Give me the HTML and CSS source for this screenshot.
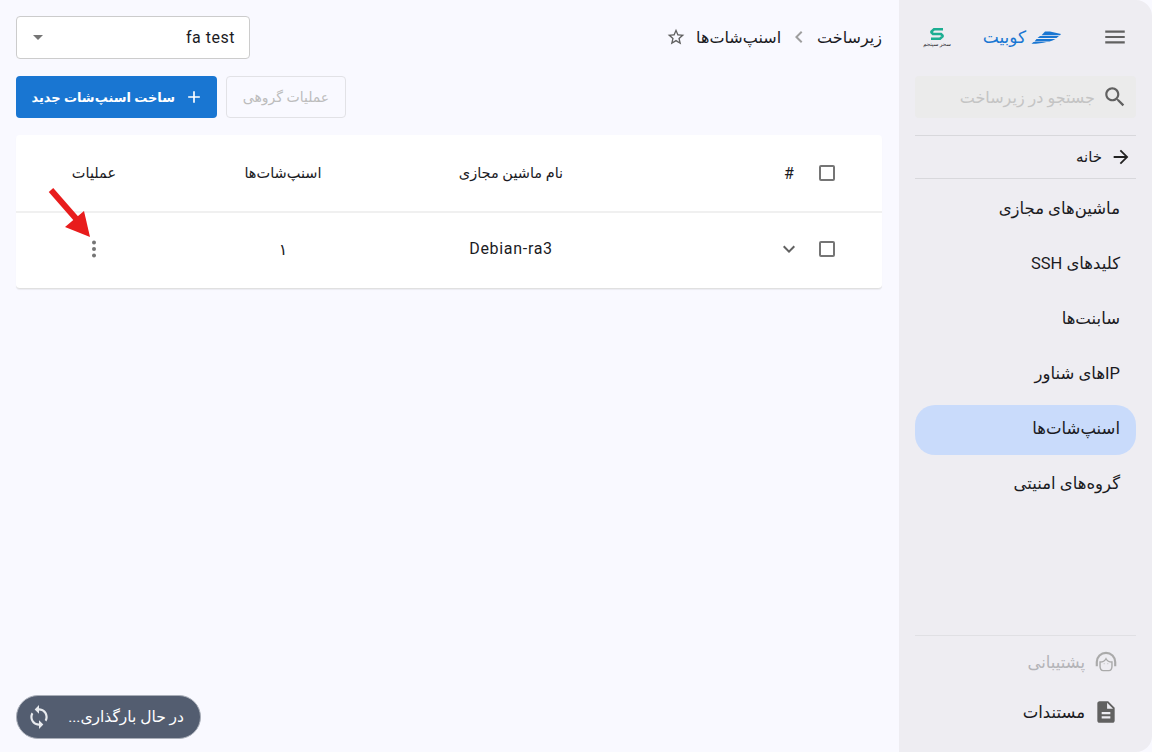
FILE: index.html
```html
<!DOCTYPE html>
<html lang="fa" dir="rtl">
<head>
    <meta charset="UTF-8">
    <title>اسنپ‌شات‌ها</title>
    <link rel="stylesheet" href="styles.css">
</head>
<body>
    <aside class="sidebar">
        <div class="side-top">
            <svg class="menu-icon" width="26" height="26" viewBox="0 0 24 24"><path d="M3 18h18v-2H3zm0-5h18v-2H3zm0-7v2h18V6z"/></svg>
            <div class="brand">
                <svg width="31" height="13" viewBox="0 0 31 13" fill="#1976d2"><path d="M14 0.5h5l11 2.5-1 1.2H10.500z"/><path d="M9 5h19l-2.500 2H6.500z"/><path d="M5.500 8h19c-2 1.200-4 2-6 2.400H3.500z"/><path d="M2.500 11h13c-4 1.200-9 1.700-15 1.800z"/></svg>
                <span>کوبیت</span>
            </div>
            <div class="partner">
                <svg width="16" height="14" viewBox="0 0 16 14" fill="none" stroke="#1cae92" stroke-width="2.600"><path d="M14 2.300H5L2.500 4.500v1L4 7h8l1.500 1.500v1L11 11.700H2"/></svg>
                <span>سحر سپنجم</span>
            </div>
        </div>
        <div class="search">
            <svg width="26" height="26" viewBox="0 0 24 24" fill="#616161"><path d="M15.5 14h-.79l-.28-.27C15.41 12.59 16 11.11 16 9.5 16 5.91 13.09 3 9.5 3S3 5.91 3 9.5 5.91 16 9.5 16c1.61 0 3.09-.59 4.23-1.57l.27.28v.79l5 4.99L20.49 19zm-6 0C7.01 14 5 11.99 5 9.5S7.01 5 9.5 5 14 7.01 14 9.5 11.99 14 9.5 14z"/></svg>
            <span>جستجو در زیرساخت</span>
        </div>
        <div class="home-link">
            <svg width="22" height="22" viewBox="0 0 24 24" fill="#222"><path d="M12 4l-1.41 1.41L16.17 11H4v2h12.17l-5.58 5.59L12 20l8-8z"/></svg>
            <span>خانه</span>
        </div>
        <nav class="nav">
            <a class="nav-item">ماشین‌های مجازی</a>
            <a class="nav-item">کلیدهای SSH</a>
            <a class="nav-item">سابنت‌ها</a>
            <a class="nav-item">IPهای شناور</a>
            <a class="nav-item active">اسنپ‌شات‌ها</a>
            <a class="nav-item">گروه‌های امنیتی</a>
        </nav>
        <div class="side-bottom">
            <div class="bottom-item muted">
                <svg width="26" height="26" viewBox="0 0 24 24" fill="none" stroke="#aaa" stroke-width="2"><path d="M3.500 16v-4a8.500 8.500 0 0 1 17 0v4"/><path d="M6.500 12c3 0 4.500-1 5.500-3 1 2 2.500 3 5.500 3v4c0 2-1 4-3 4h-5c-2 0-3-2-3-4z" stroke-width="1.300"/><path d="M10 13.500h.5M13.500 13.500h.5" stroke-width="1.300"/></svg>
                <span>پشتیبانی</span>
            </div>
            <div class="bottom-item">
                <svg width="26" height="26" viewBox="0 0 24 24" fill="#616161"><path d="M14 2H6c-1.100 0-2 .9-2 2v16c0 1.100.9 2 2 2h12c1.100 0 2-.9 2-2V8zm2 16H8v-2h8zm0-4H8v-2h8zm-3-5V3.500L18.500 9z"/></svg>
                <span>مستندات</span>
            </div>
        </div>
    </aside>

    <main class="main">
        <header class="top-row">
            <div class="crumbs">
                <span>زیرساخت</span>
                <svg width="24" height="24" viewBox="0 0 24 24" fill="#9e9e9e"><path d="M15.410 7.410 14 6l-6 6 6 6 1.410-1.410L10.830 12z"/></svg>
                <span>اسنپ‌شات‌ها</span>
                <svg class="star" width="20" height="20" viewBox="0 0 24 24" fill="#616161"><path d="M22 9.240l-7.190-.62L12 2 9.190 8.630 2 9.240l5.460 4.730L5.820 21 12 17.270 18.180 21l-1.630-7.030L22 9.240zM12 15.400l-3.760 2.270 1-4.280-3.320-2.880 4.380-.38L12 6.100l1.710 4.040 4.380.38-3.320 2.880 1 4.280L12 15.400z"/></svg>
            </div>
            <div class="select">
                <span>fa test</span>
                <i class="caret"></i>
            </div>
        </header>

        <div class="toolbar">
            <button class="btn btn-primary">
                <svg width="20" height="20" viewBox="0 0 24 24" fill="#fff"><path d="M19 13h-6v6h-2v-6H5v-2h6V5h2v6h6z"/></svg>
                <span>ساخت اسنپ‌شات جدید</span>
            </button>
            <button class="btn btn-disabled">عملیات گروهی</button>
        </div>

        <section class="table">
            <div class="row row-head">
                <span class="check"></span>
                <span class="cell cell-hash">#</span>
                <span></span>
                <span class="cell">نام ماشین مجازی</span>
                <span class="cell">اسنپ‌شات‌ها</span>
                <span class="cell cell-ops">عملیات</span>
            </div>
            <div class="row row-body">
                <span class="check"></span>
                <svg class="cell-icon" width="24" height="24" viewBox="0 0 24 24" fill="#616161"><path d="M7.410 8.590 12 13.170l4.590-4.580L18 10l-6 6-6-6z"/></svg>
                <span></span>
                <span class="cell cell-name">Debian-ra3</span>
                <span class="cell">۱</span>
                <span class="cell cell-ops">
                    <svg class="dots" width="24" height="24" viewBox="0 0 24 24" fill="#757575"><circle cx="12" cy="5.500" r="2"/><circle cx="12" cy="12" r="2"/><circle cx="12" cy="18.500" r="2"/></svg>
                </span>
            </div>
        </section>

        <svg class="red-arrow" width="50" height="56" viewBox="0 0 50 56"><path d="M3 2 L31 34" stroke="#e81c1c" stroke-width="6" fill="none"/><path d="M42 49 L17 39 L36 23z" fill="#e81c1c"/></svg>

        <div class="loading">
            <span>در حال بارگذاری...</span>
            <svg width="26" height="26" viewBox="0 0 24 24" fill="#e8eaee"><path d="M12 4V1L8 5l4 4V6c3.310 0 6 2.690 6 6 0 1.010-.25 1.970-.7 2.800l1.460 1.460C19.540 15.030 20 13.570 20 12c0-4.420-3.580-8-8-8zm0 14c-3.310 0-6-2.690-6-6 0-1.010.25-1.970.7-2.800L5.240 7.740C4.460 8.970 4 10.430 4 12c0 4.420 3.580 8 8 8v3l4-4-4-4z"/></svg>
        </div>
    </main>
</body>
</html>
```

FILE: styles.css
```css
* {
    box-sizing: border-box;
}

html, body {
    height: 100%;
}

body {
    margin: 0;
    display: flex;
    height: 752px;
    overflow: hidden;
    background-color: #f9f9ff;
    color: #1b1b1f;
    font-family: Roboto, "Noto Sans", "DejaVu Sans", sans-serif;
    font-size: 16px;
}

/* sidebar */
.sidebar {
    width: 253px;
    flex-shrink: 0;
    display: flex;
    flex-direction: column;
    padding: 0 16px 15px;
    background-color: #eeedf2;
    border-radius: 0 16px 16px 0;
}

.side-top {
    display: flex;
    align-items: center;
    justify-content: space-between;
    height: 76px;
    padding: 0 8px 2px 0;
}

.menu-icon {
    fill: #616161;
}

.brand {
    display: flex;
    align-items: center;
    gap: 5px;
    margin-right: 5px;
    color: #1976d2;
    font-size: 17px;
    font-weight: 500;
}

.partner {
    display: flex;
    flex-direction: column;
    align-items: center;
    width: 22px;
    margin-left: 11px;
    font-size: 5.500px;
    line-height: 7px;
    white-space: nowrap;
}

.search {
    display: flex;
    align-items: center;
    gap: 7px;
    height: 42px;
    padding: 0 8px;
    margin-bottom: 17px;
    background-color: #ebebeb;
    border-radius: 4px;
    color: #c4c4c4;
    font-size: 16px;
}

.home-link {
    display: flex;
    align-items: center;
    gap: 8px;
    height: 44px;
    padding: 0 4px;
    border-top: 1px solid #d8d8dc;
    border-bottom: 1px solid #d8d8dc;
    font-size: 15px;
}

.nav {
    display: flex;
    flex-direction: column;
    margin-top: 3px;
}

.nav-item {
    display: flex;
    align-items: center;
    height: 50px;
    margin: 2.500px 0;
    padding: 0 16px 2px;
    border-radius: 20px;
    font-size: 16.500px;
}

.nav-item.active {
    background-color: #c9dbfb;
}

.side-bottom {
    margin-top: auto;
    padding-top: 1px;
    border-top: 1px solid #e0e0e4;
}

.bottom-item {
    display: flex;
    align-items: center;
    gap: 8px;
    height: 50px;
    padding: 0 17px 0 0;
    font-size: 16.500px;
}

.muted {
    color: #b4b4b8;
}

/* main */
.main {
    position: relative;
    flex: 1;
    padding: 16px 17px 16px 16px;
}

.top-row {
    display: flex;
    align-items: center;
    justify-content: space-between;
    height: 42px;
    margin-bottom: 18px;
}

.crumbs {
    display: flex;
    align-items: center;
    gap: 6px;
    font-size: 16px;
}

.star {
    margin-right: 4px;
}

.select {
    display: flex;
    align-items: center;
    justify-content: space-between;
    width: 234px;
    height: 43px;
    padding: 0 14px;
    background-color: #fff;
    border: 1px solid #ccc;
    border-radius: 4px;
    font-size: 16px;
    letter-spacing: 0.500px;
}

.caret {
    width: 0;
    height: 0;
    margin-left: 2px;
    border-left: 5px solid transparent;
    border-right: 5px solid transparent;
    border-top: 5px solid #757575;
}

.toolbar {
    display: flex;
    flex-direction: row-reverse;
    justify-content: flex-start;
    gap: 9px;
    margin-bottom: 17px;
}

.btn {
    display: flex;
    align-items: center;
    gap: 9px;
    height: 42px;
    padding: 0 13px;
    border-radius: 4px;
    font-family: inherit;
    font-size: 14px;
    white-space: nowrap;
}

.btn svg {
    flex-shrink: 0;
}

.btn-primary {
    width: 201px;
    background-color: #1976d2;
    border: none;
    color: #fff;
    font-size: 13px;
    font-weight: 700;
}

.btn-disabled {
    width: 120px;
    justify-content: center;
    background: none;
    border: 1px solid #e2e2e6;
    color: #bdbdbd;
}

.table {
    background-color: #fff;
    border-bottom: 1px solid #e0e0e0;
    border-radius: 4px;
    box-shadow: 0 1px 1px rgba(0, 0, 0, 0.06);
}

.row {
    display: grid;
    grid-template-columns: 44px 32px 148px 228px 228px 1fr;
    align-items: center;
    padding-right: 33px;
}

.row-head {
    height: 78px;
    border-bottom: 2px solid #f0f0f0;
    font-size: 14.500px;
    font-weight: 500;
}

.row-body {
    height: 75px;
    padding-bottom: 3px;
    font-size: 16px;
}

.cell {
    text-align: center;
}

.cell-hash {
    font-size: 16px;
    font-weight: 400;
}

.cell-name {
    letter-spacing: 0.700px;
    padding-bottom: 2px;
}

.cell-ops {
    display: block;
    padding-left: 3px;
}

.dots {
    display: block;
    margin: 0 auto;
}

.cell-icon {
    justify-self: center;
}

.check {
    justify-self: center;
    width: 16px;
    height: 16px;
    border: 2px solid #757575;
    border-radius: 2px;
}

/* overlays */
.red-arrow {
    position: absolute;
    left: 48px;
    top: 188px;
}

.loading {
    position: absolute;
    left: 16px;
    bottom: 13px;
    display: flex;
    align-items: center;
    justify-content: space-between;
    width: 185px;
    height: 44px;
    padding: 0 16px 0 9px;
    background-color: #535d70;
    border: 1px solid #a9aeb8;
    border-radius: 22px;
    color: #fff;
    font-size: 15.500px;
}
```
